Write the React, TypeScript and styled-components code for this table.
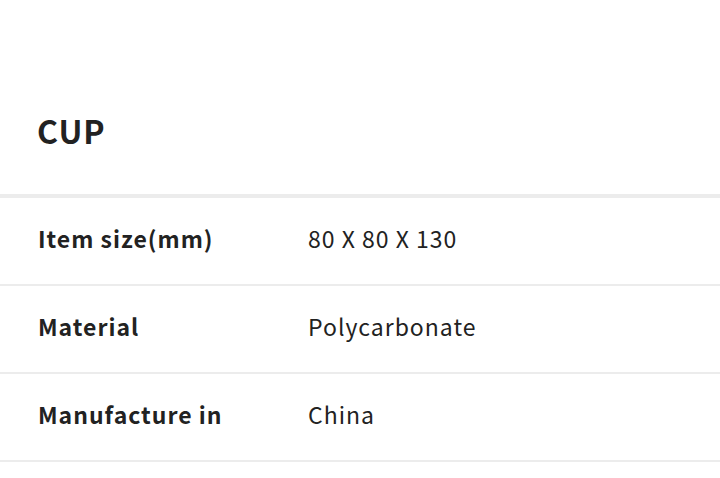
import React from "react";
import styled, { createGlobalStyle } from "styled-components";

const Global = createGlobalStyle`
  html, body { margin: 0; padding: 0; background: #fff; }
  body { font-family: "Noto Sans CJK KR", "Noto Sans", sans-serif; color: #222; }
`;

const Page = styled.div`
  width: 720px;
  display: flex;
  flex-direction: column;
`;

const Header = styled.div`
  height: 198px;
  display: flex;
  align-items: flex-start;
  padding: 108px 0 0 37px;
  box-sizing: border-box;
  border-bottom: 4px solid #ececec;
`;

const Title = styled.h2`
  margin: 0;
  font-size: 32px;
  line-height: 44px;
  font-weight: 700;
  color: #222;
  letter-spacing: 1px;
`;

const Table = styled.div`
  display: flex;
  flex-direction: column;
`;

const Row = styled.div`
  display: grid;
  grid-template-columns: 270px 1fr;
  align-items: center;
  box-sizing: border-box;
  height: 88px;
  padding: 0 0 6px 38px;
  border-bottom: 2px solid #ececec;
`;

const Label = styled.div`
  font-size: 23px;
  font-weight: 700;
  color: #222;
  letter-spacing: 1px;
`;

const Value = styled.div`
  font-size: 23px;
  font-weight: 400;
  color: #222;
  letter-spacing: 1px;
`;

const rows = [
  ["Item size(mm)", "80 X 80 X 130"],
  ["Material", "Polycarbonate"],
  ["Manufacture in", "China"],
];

export default function App() {
  return (
    <Page>
      <Global />
      <Header>
        <Title>CUP</Title>
      </Header>
      <Table>
        {rows.map(([l, v]) => (
          <Row key={l}>
            <Label>{l}</Label>
            <Value>{v}</Value>
          </Row>
        ))}
      </Table>
    </Page>
  );
}
